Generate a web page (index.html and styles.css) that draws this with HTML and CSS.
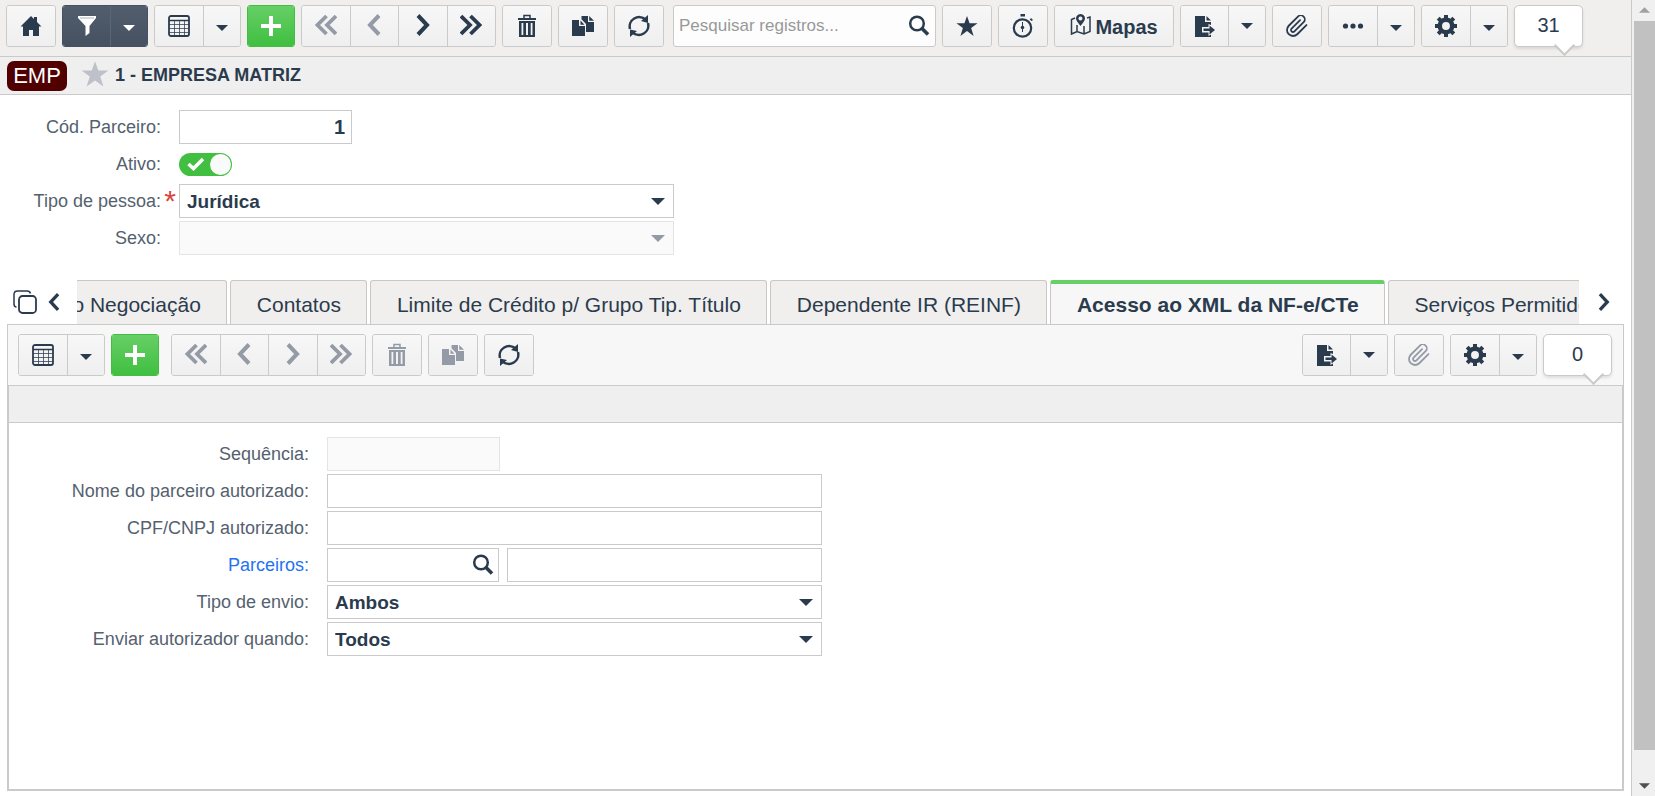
FILE: index.html
```html
<!DOCTYPE html>
<html lang="pt-BR">
<head>
    <meta charset="UTF-8">
    <meta name="viewport" content="width=device-width, initial-scale=1.0">
    <title>Parceiros</title>
    <link rel="stylesheet" href="styles.css">
</head>
<body>
    <!-- Shared icons -->
    <svg class="sprite" aria-hidden="true">
        <symbol id="i-home" viewBox="0 0 22 22"><path d="M11 1 L14 4 V2 H17 V7 L21.500 11.500 H19 V21 H13 V15 H9 V21 H3 V11.500 H.5 Z"/></symbol>
        <symbol id="i-filter" viewBox="0 0 22 22"><path d="M2 1 H20 V3 L13.500 11 V18 L9.500 21 V11 L2 3 Z"/><path d="M4 3 H18" stroke="#a9b0b9"/></symbol>
        <symbol id="i-table" viewBox="0 0 22 22"><rect x="1" y="1" width="20" height="20" rx="2" fill="none" stroke="currentColor" stroke-width="1.800"/><path d="M1 5.500 H21" stroke="currentColor" stroke-width="1.600"/><path d="M1 9.500 H21 M1 13.500 H21 M1 17.500 H21 M6.500 5 V21 M11.500 5 V21 M16.500 5 V21" stroke="currentColor" stroke-opacity=".75" fill="none"/></symbol>
        <symbol id="i-plus" viewBox="0 0 22 22"><path d="M9 1 H13 V9 H21 V13 H13 V21 H9 V13 H1 V9 H9 Z"/></symbol>
        <symbol id="i-left" viewBox="0 0 22 22"><path d="M16 1.500 L7 11 L16 20.500" fill="none" stroke="currentColor" stroke-width="4"/></symbol>
        <symbol id="i-right" viewBox="0 0 22 22"><path d="M6 1.500 L15 11 L6 20.500" fill="none" stroke="currentColor" stroke-width="4"/></symbol>
        <symbol id="i-first" viewBox="0 0 22 22"><path d="M11.500 2 L2.500 11 L11.500 20 M21 2 L12 11 L21 20" fill="none" stroke="currentColor" stroke-width="3.800"/></symbol>
        <symbol id="i-last" viewBox="0 0 22 22"><path d="M1 2 L10 11 L1 20 M10.500 2 L19.500 11 L10.500 20" fill="none" stroke="currentColor" stroke-width="3.800"/></symbol>
        <symbol id="i-trash" viewBox="0 0 22 24"><path d="M8 4.500 V1.500 H14 V4.500" fill="none" stroke="currentColor" stroke-width="1.500"/><path d="M2 4 H20 V6 H2 Z"/><path fill-rule="evenodd" d="M3 7 H19 V23 H3 Z M5.500 9 V21 H7.300 V9 Z M10 9 V21 H12 V9 Z M14.700 9 V21 H16.500 V9 Z"/></symbol>
        <symbol id="i-copy" viewBox="0 0 22 22"><path d="M0 5 H7 V11 H13 V21 H0 Z M8.500 5.500 L12.500 9.700 H8.500 Z"/><path d="M9.500 1 H16 V7 H22 V17 H14 V9 L9.500 4.200 Z M17.200 1 L22 5.800 H17.200 Z"/></symbol>
        <symbol id="i-refresh" viewBox="0 0 22 22"><path d="M2 14 A9.500 9.500 0 0 1 17.500 4.500 M20 8 A9.500 9.500 0 0 1 4.500 17.500" fill="none" stroke="currentColor" stroke-width="2.500"/><path d="M20 0 V8 L13 6 Z M2 22 V14.500 L9 16 Z"/></symbol>
        <symbol id="i-search" viewBox="0 0 22 22"><circle cx="9" cy="8.500" r="6.800" fill="none" stroke="currentColor" stroke-width="2.500"/><path d="M13.500 13 L20 19.500" stroke="currentColor" stroke-width="3.500"/></symbol>
        <symbol id="i-star" viewBox="0 0 24 24"><path d="M12 1 L14.800 9 H23.500 L16.500 14.200 L19.200 22.800 L12 17.500 L4.800 22.800 L7.500 14.200 L.5 9 H9.200 Z"/></symbol>
        <symbol id="i-watch" viewBox="0 0 22 24"><circle cx="10.500" cy="14" r="8.700" fill="none" stroke="currentColor" stroke-width="2.200"/><path d="M8.500 0 H13 V2.500 H8.500 Z M19 4 L21 6 L19.500 7 L17.800 5.500 Z"/><path d="M10.500 8 V18" stroke="currentColor"/><circle cx="10.500" cy="13.500" r="1.800"/></symbol>
        <symbol id="i-map" viewBox="0 0 22 24"><path d="M5 5 L1.500 6.500 V21 L7 18.500 L14 21 L20 18.500 V4 L17 5 M7 12 V18.500 M14 13 V21" fill="none" stroke="currentColor" stroke-width="1.500"/><path fill-rule="evenodd" d="M10.500 1 C7.500 1 6 3.200 6 5.500 C6 8 8.500 10 10.500 13 C12.500 10 15 8 15 5.500 C15 3.200 13.500 1 10.500 1 Z M10.500 3.500 A2 2 0 1 1 10.400 3.500 Z"/></symbol>
        <symbol id="i-export" viewBox="0 0 22 24"><path d="M1 2 H11 V8 H17 V11 L14.500 10 V13 H8 V18.500 H14.500 V22 L17 20.500 V23 H1 Z M12.500 2 L17 6.500 H12.500 Z"/><path d="M9.500 14.500 H15.500 V11.500 L21 16 L15.500 20.500 V17 H9.500 Z"/></symbol>
        <symbol id="i-clip" viewBox="1 1 22 22"><path d="M21.440 11.050 L12.250 20.240 A6 6 0 0 1 3.760 11.750 L12.950 2.560 A4 4 0 0 1 18.610 8.220 L9.410 17.410 A2 2 0 0 1 6.580 14.580 L15.070 6.100" fill="none" stroke="currentColor" stroke-width="1.800" stroke-linecap="round"/></symbol>
        <symbol id="i-dots" viewBox="0 0 22 22"><circle cx="3.500" cy="11" r="2.600"/><circle cx="11" cy="11" r="2.600"/><circle cx="18.500" cy="11" r="2.600"/></symbol>
        <symbol id="i-gear" viewBox="0 0 22 22"><circle cx="11" cy="11" r="6.200" fill="none" stroke="currentColor" stroke-width="4.500"/><path d="M11 0 V4 M11 18 V22 M0 11 H4 M18 11 H22 M3.200 3.200 L6 6 M16 16 L18.800 18.800 M18.800 3.200 L16 6 M6 16 L3.200 18.800" stroke="currentColor" stroke-width="4"/></symbol>
        <symbol id="i-tabs" viewBox="0 0 24 24"><rect x="6" y="6" width="17" height="17" rx="3.500" fill="none" stroke="currentColor" stroke-width="1.800"/><path d="M3.500 17 Q1 17 1 14 V4.500 Q1 1 4.500 1 H14 Q17 1 17.500 3.500" fill="none" stroke="currentColor" stroke-width="1.500"/></symbol>
        <symbol id="i-down" viewBox="0 0 14 7"><path d="M0 0 H14 L7 7 Z"/></symbol>
        <symbol id="i-check" viewBox="0 0 18 14"><path d="M1.500 7 L6.500 11.500 L16 2" fill="none" stroke="currentColor" stroke-width="3.500"/></symbol>
    </svg>

    <main class="page">
        <header class="toolbar">
            <div class="group"><button type="button" class="btn" aria-label="Início"><svg class="icon"><use href="#i-home"/></svg></button></div>
            <div class="group dark">
                <button type="button" class="btn" aria-label="Filtro"><svg class="icon"><use href="#i-filter"/></svg></button>
                <button type="button" class="btn caret" aria-label="Opções de filtro"><svg class="arrow"><use href="#i-down"/></svg></button>
            </div>
            <div class="group">
                <button type="button" class="btn" aria-label="Grade"><svg class="icon"><use href="#i-table"/></svg></button>
                <button type="button" class="btn caret" aria-label="Opções da grade"><svg class="arrow"><use href="#i-down"/></svg></button>
            </div>
            <div class="group green"><button type="button" class="btn" aria-label="Novo"><svg class="icon"><use href="#i-plus"/></svg></button></div>
            <div class="group nav">
                <button type="button" class="btn" aria-label="Primeiro" disabled><svg class="icon"><use href="#i-first"/></svg></button>
                <button type="button" class="btn" aria-label="Anterior" disabled><svg class="icon"><use href="#i-left"/></svg></button>
                <button type="button" class="btn" aria-label="Próximo"><svg class="icon"><use href="#i-right"/></svg></button>
                <button type="button" class="btn" aria-label="Último"><svg class="icon"><use href="#i-last"/></svg></button>
            </div>
            <div class="group"><button type="button" class="btn" aria-label="Excluir"><svg class="icon tall"><use href="#i-trash"/></svg></button></div>
            <div class="group"><button type="button" class="btn" aria-label="Duplicar"><svg class="icon"><use href="#i-copy"/></svg></button></div>
            <div class="group"><button type="button" class="btn" aria-label="Atualizar"><svg class="icon"><use href="#i-refresh"/></svg></button></div>
            <div class="search">
                <input type="text" placeholder="Pesquisar registros..." aria-label="Pesquisar registros">
                <svg class="icon"><use href="#i-search"/></svg>
            </div>
            <div class="group"><button type="button" class="btn" aria-label="Favoritos"><svg class="icon"><use href="#i-star"/></svg></button></div>
            <div class="group"><button type="button" class="btn" aria-label="Histórico"><svg class="icon tall"><use href="#i-watch"/></svg></button></div>
            <div class="group"><button type="button" class="btn maps"><svg class="icon tall"><use href="#i-map"/></svg><span>Mapas</span></button></div>
            <div class="group export">
                <button type="button" class="btn" aria-label="Exportar"><svg class="icon tall"><use href="#i-export"/></svg></button>
                <button type="button" class="btn caret" aria-label="Opções de exportação"><svg class="arrow"><use href="#i-down"/></svg></button>
            </div>
            <div class="group"><button type="button" class="btn" aria-label="Anexos"><svg class="icon"><use href="#i-clip"/></svg></button></div>
            <div class="group">
                <button type="button" class="btn" aria-label="Mais"><svg class="icon"><use href="#i-dots"/></svg></button>
                <button type="button" class="btn caret" aria-label="Mais opções"><svg class="arrow"><use href="#i-down"/></svg></button>
            </div>
            <div class="group">
                <button type="button" class="btn" aria-label="Configurações"><svg class="icon"><use href="#i-gear"/></svg></button>
                <button type="button" class="btn caret" aria-label="Opções de configuração"><svg class="arrow"><use href="#i-down"/></svg></button>
            </div>
            <div class="counter">31</div>
        </header>

        <div class="title-bar">
            <span class="tag">EMP</span>
            <svg class="fav"><use href="#i-star"/></svg>
            <h1>1 - EMPRESA MATRIZ</h1>
        </div>

        <form class="form main-form">
            <label for="codigo">Cód. Parceiro:</label>
            <input type="text" id="codigo" class="field short number" value="1">

            <label for="ativo">Ativo:</label>
            <div class="switch">
                <input type="checkbox" id="ativo" checked>
                <svg class="check"><use href="#i-check"/></svg>
            </div>

            <label for="tipo" class="required">Tipo de pessoa:</label>
            <div class="select">
                <select id="tipo" class="field"><option>Jurídica</option></select>
                <svg class="arrow"><use href="#i-down"/></svg>
            </div>

            <label for="sexo">Sexo:</label>
            <div class="select">
                <select id="sexo" class="field" disabled><option></option></select>
                <svg class="arrow"><use href="#i-down"/></svg>
            </div>
        </form>

        <div class="tab-bar">
            <div class="tab-tools">
                <button type="button" class="plain" aria-label="Abas"><svg class="tabs-icon"><use href="#i-tabs"/></svg></button>
                <button type="button" class="plain" aria-label="Abas anteriores"><svg class="chevron"><use href="#i-left"/></svg></button>
            </div>
            <nav class="tabs">
                <button type="button" class="tab">Tipo Negociação</button>
                <button type="button" class="tab">Contatos</button>
                <button type="button" class="tab">Limite de Crédito p/ Grupo Tip. Título</button>
                <button type="button" class="tab">Dependente IR (REINF)</button>
                <button type="button" class="tab active">Acesso ao XML da NF-e/CTe</button>
                <button type="button" class="tab">Serviços Permitidos</button>
            </nav>
            <div class="tab-next">
                <button type="button" class="plain" aria-label="Próximas abas"><svg class="chevron"><use href="#i-right"/></svg></button>
            </div>
        </div>

        <section class="panel">
            <div class="toolbar sub">
                <div class="group">
                    <button type="button" class="btn" aria-label="Grade"><svg class="icon"><use href="#i-table"/></svg></button>
                    <button type="button" class="btn caret" aria-label="Opções da grade"><svg class="arrow"><use href="#i-down"/></svg></button>
                </div>
                <div class="group green"><button type="button" class="btn" aria-label="Novo"><svg class="icon"><use href="#i-plus"/></svg></button></div>
                <div class="group nav">
                    <button type="button" class="btn" aria-label="Primeiro" disabled><svg class="icon"><use href="#i-first"/></svg></button>
                    <button type="button" class="btn" aria-label="Anterior" disabled><svg class="icon"><use href="#i-left"/></svg></button>
                    <button type="button" class="btn" aria-label="Próximo" disabled><svg class="icon"><use href="#i-right"/></svg></button>
                    <button type="button" class="btn" aria-label="Último" disabled><svg class="icon"><use href="#i-last"/></svg></button>
                </div>
                <div class="group"><button type="button" class="btn" aria-label="Excluir" disabled><svg class="icon tall"><use href="#i-trash"/></svg></button></div>
                <div class="group"><button type="button" class="btn" aria-label="Duplicar" disabled><svg class="icon"><use href="#i-copy"/></svg></button></div>
                <div class="group"><button type="button" class="btn" aria-label="Atualizar"><svg class="icon"><use href="#i-refresh"/></svg></button></div>
                <div class="group export push">
                    <button type="button" class="btn" aria-label="Exportar"><svg class="icon tall"><use href="#i-export"/></svg></button>
                    <button type="button" class="btn caret" aria-label="Opções de exportação"><svg class="arrow"><use href="#i-down"/></svg></button>
                </div>
                <div class="group"><button type="button" class="btn" aria-label="Anexos" disabled><svg class="icon"><use href="#i-clip"/></svg></button></div>
                <div class="group">
                    <button type="button" class="btn" aria-label="Configurações"><svg class="icon"><use href="#i-gear"/></svg></button>
                    <button type="button" class="btn caret" aria-label="Opções de configuração"><svg class="arrow"><use href="#i-down"/></svg></button>
                </div>
                <div class="counter">0</div>
            </div>

            <div class="detail">
                <div class="detail-head"></div>
                <form class="form detail-form">
                    <label for="sequencia">Sequência:</label>
                    <input type="text" id="sequencia" class="field short" disabled>

                    <label for="nome">Nome do parceiro autorizado:</label>
                    <input type="text" id="nome" class="field">

                    <label for="cpf">CPF/CNPJ autorizado:</label>
                    <input type="text" id="cpf" class="field">

                    <label for="parceiro" class="link">Parceiros:</label>
                    <div class="lookup">
                        <div class="lookup-code">
                            <input type="text" id="parceiro" class="field">
                            <svg class="icon"><use href="#i-search"/></svg>
                        </div>
                        <input type="text" class="field" aria-label="Nome do parceiro">
                    </div>

                    <label for="envio">Tipo de envio:</label>
                    <div class="select">
                        <select id="envio" class="field"><option>Ambos</option></select>
                        <svg class="arrow"><use href="#i-down"/></svg>
                    </div>

                    <label for="quando">Enviar autorizador quando:</label>
                    <div class="select">
                        <select id="quando" class="field"><option>Todos</option></select>
                        <svg class="arrow"><use href="#i-down"/></svg>
                    </div>
                </form>
            </div>
        </section>
    </main>

    <div class="scrollbar" aria-hidden="true">
        <svg class="scroll-arrow up"><use href="#i-down"/></svg>
        <div class="thumb"></div>
        <svg class="scroll-arrow"><use href="#i-down"/></svg>
    </div>
</body>
</html>
```
FILE: styles.css
```css
* {
    box-sizing: border-box;
}
body {
    margin: 0;
    display: flex;
    height: 100vh;
    overflow: hidden;
    background: #ffffff;
    color: #2b3b4e;
    font-family: "Liberation Sans", Arial, sans-serif;
    font-size: 18px;
}
button, input, select {
    font-family: inherit;
    color: inherit;
    margin: 0;
}
svg {
    fill: currentColor;
    flex: none;
}
.sprite {
    position: absolute;
    width: 0;
    height: 0;
}
.page {
    flex: 1;
    min-width: 0;
    display: flex;
    flex-direction: column;
    border-right: 1px solid #cacaca;
}

/* Toolbars */
.toolbar {
    display: flex;
    gap: 6px;
    height: 57px;
    padding: 5px 6px 9px;
    background: #f0efed;
    border-bottom: 1px solid #cacaca;
}
.group {
    display: flex;
    flex: none;
    height: 42px;
    border: 1px solid #cacaca;
    border-radius: 3px;
    overflow: hidden;
}
.btn {
    display: flex;
    align-items: center;
    justify-content: center;
    width: 48px;
    padding: 0;
    border: none;
    background: linear-gradient(#f7f7f7, #efefef);
    cursor: pointer;
}
.btn + .btn {
    border-left: 1px solid #cacaca;
}
.btn:disabled {
    color: #949ba6;
    cursor: default;
}
.nav {
    width: 195px;
}
.nav .btn {
    flex: 1;
}
.nav .btn .icon {
    margin-bottom: 2px;
}
.icon {
    width: 22px;
    height: 22px;
}
.icon.tall {
    height: 24px;
}
.arrow {
    width: 12px;
    height: 6px;
    margin-top: 3px;
}
.dark {
    border-color: #465262;
    color: #ffffff;
}
.dark .btn {
    width: 47px;
    background: linear-gradient(#525e6e, #455161);
}
.dark .btn + .btn {
    border-color: #5a6675;
}
.green {
    border-color: #41bf41;
    color: #ffffff;
}
.green .btn {
    width: 46px;
    background: linear-gradient(#66cf66, #40bf40);
}
.export .btn {
    width: 47px;
}
.export .arrow {
    margin-top: 0;
}
.group .btn.caret {
    width: 37px;
}
.btn.maps {
    width: 118px;
    gap: 3px;
    font-size: 20px;
    font-weight: bold;
}
.maps .icon {
    margin-bottom: 3px;
}
.maps span {
    margin-top: 3px;
}
.search {
    display: flex;
    align-items: center;
    flex: 0 1 263px;
    min-width: 0;
    height: 42px;
    margin-left: 3px;
    padding: 0 5px;
    background: #fdfdfd;
    border: 1px solid #cacaca;
    border-radius: 3px;
}
.search input {
    flex: 1;
    min-width: 0;
    padding: 0;
    border: none;
    outline: none;
    background: transparent;
    font-size: 17px;
}
.search input::placeholder {
    color: #999999;
}
.counter {
    position: relative;
    flex: none;
    width: 69px;
    height: 42px;
    border: 1px solid #cacaca;
    border-radius: 5px;
    background: #ffffff;
    box-shadow: 0 2px 3px rgba(0, 0, 0, 0.1);
    font-size: 20px;
    line-height: 39px;
    text-align: center;
}
.counter::after {
    content: "";
    position: absolute;
    right: 10px;
    bottom: -7px;
    width: 13px;
    height: 13px;
    border: solid #cacaca;
    border-width: 0 2px 2px 0;
    background: linear-gradient(135deg, transparent 50%, #ffffff 50%);
    transform: rotate(45deg);
}

/* Record title */
.title-bar {
    display: flex;
    align-items: center;
    height: 38px;
    padding: 0 7px;
    background: #efefef;
    border-bottom: 1px solid #cacaca;
}
.tag {
    width: 60px;
    border-radius: 7px;
    background: #500000;
    color: #ffffff;
    font-size: 22px;
    line-height: 30px;
    text-align: center;
}
.fav {
    width: 28px;
    height: 28px;
    margin: 0 6px 4px 14px;
    color: #bec1c9;
}
h1 {
    margin: 0;
    font-size: 18px;
}

/* Forms */
.form {
    display: grid;
    grid-auto-rows: 34px;
    gap: 3px 18px;
    align-items: center;
}
.main-form {
    grid-template-columns: 161px minmax(0, 495px);
    padding: 15px 0 25px;
}
.detail-form {
    grid-template-columns: 300px minmax(0, 495px);
    padding: 14px 0;
}
.form label {
    color: #55616f;
    text-align: right;
}
.form label.link {
    color: #2471f5;
}
.required {
    position: relative;
}
.required::after {
    content: "*";
    position: absolute;
    right: -15px;
    top: -4px;
    color: #d9453b;
    font-size: 30px;
    line-height: 28px;
}
.field {
    width: 100%;
    height: 34px;
    padding: 0 7px;
    border: 1px solid #cacaca;
    border-radius: 0;
    outline: none;
    background: #ffffff;
    font-size: 20px;
    font-weight: bold;
}
.field:disabled {
    border-color: #e4e4e4;
    background: #fafafa;
    opacity: 1;
}
.field.short {
    width: 173px;
}
.field.number {
    padding: 0 6px;
    text-align: right;
}
select.field {
    appearance: none;
    font-size: 19px;
}
.select {
    position: relative;
}
.select .arrow {
    position: absolute;
    right: 9px;
    top: 11px;
    width: 14px;
    height: 7px;
    pointer-events: none;
}
.field:disabled + .arrow {
    color: #949ba6;
}
.switch {
    position: relative;
    height: 23px;
}
.switch input {
    display: block;
    appearance: none;
    width: 53px;
    height: 23px;
    border-radius: 12px;
    background: #41bf41;
}
.switch input::after {
    content: "";
    display: block;
    width: 21px;
    height: 21px;
    margin: 1px 1px 1px 31px;
    border-radius: 50%;
    background: #fafafa;
}
.check {
    position: absolute;
    left: 8px;
    top: 4px;
    width: 18px;
    height: 14px;
    color: #ffffff;
    pointer-events: none;
}
.lookup {
    display: flex;
    gap: 8px;
}
.lookup-code {
    position: relative;
    flex: 0 0 172px;
}
.lookup-code .icon {
    position: absolute;
    right: 5px;
    top: 6px;
}

/* Tabs */
.tab-bar {
    display: flex;
    height: 44px;
}
.tab-tools, .tab-next {
    display: flex;
    align-items: center;
    flex: none;
}
.tab-tools {
    gap: 8px;
    width: 77px;
    padding-left: 13px;
}
.tab-next {
    width: 52px;
    padding-left: 16px;
}
.plain {
    padding: 0;
    border: none;
    background: none;
    cursor: pointer;
}
.plain svg {
    display: block;
}
.tabs-icon {
    width: 24px;
    height: 24px;
}
.chevron {
    width: 18px;
    height: 18px;
}
.tabs {
    display: flex;
    flex: 1;
    gap: 3px;
    min-width: 0;
    overflow: hidden;
}
.tab {
    flex: none;
    height: 44px;
    padding: 4px 25px 0 26px;
    border: 1px solid #cbc6c6;
    border-bottom: none;
    border-radius: 3px 3px 0 0;
    background: #f0efed;
    font-size: 21px;
    white-space: nowrap;
}
/* the strip is scrolled part of the way into its first tab */
.tab:first-child {
    margin-left: -60px;
}
.tab.active {
    padding-top: 1px;
    border-top: 4px solid #66cf66;
    background: #f7f7f7;
    font-weight: bold;
}

/* Detail panel */
.panel {
    display: flex;
    flex: 1;
    flex-direction: column;
    min-height: 0;
    margin: 0 7px 5px;
}
.toolbar.sub {
    height: 61px;
    padding: 9px 11px 8px 10px;
    background: #f7f7f7;
    border: 1px solid #cacaca;
    border-bottom: none;
}
.sub .nav {
    margin-left: 6px;
}
.push {
    margin-left: auto;
}
.detail {
    flex: 1;
    border: 2px solid #cacaca;
    border-top-width: 1px;
}
.detail-head {
    height: 37px;
    background: #efefef;
    border-bottom: 1px solid #cacaca;
}

/* Scroll bar */
.scrollbar {
    display: flex;
    flex-direction: column;
    align-items: center;
    width: 23px;
    padding: 7px 0;
    padding-left: 2px;
    background: #f0f0f0;
}
.scroll-arrow {
    width: 11px;
    height: 6px;
    color: #505050;
}
.scroll-arrow.up {
    color: #a0a0a0;
    transform: rotate(180deg);
}
.thumb {
    width: 100%;
    flex: 1;
    margin: 8px 0 33px;
    background: #c1c1c1;
}
```
